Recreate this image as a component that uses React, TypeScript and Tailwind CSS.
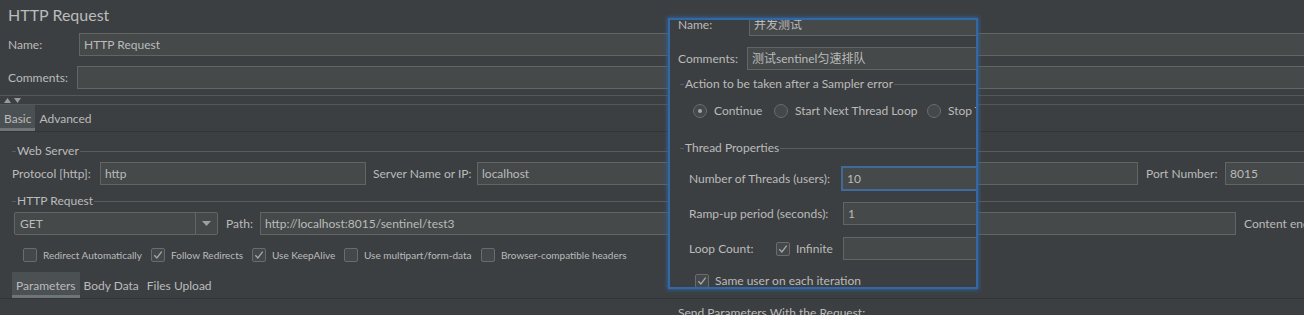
import React from "react";

function Input({ value = "", className = "" }: { value?: string; className?: string }) {
    return (
        <div
            className={`h-[23px] border border-[#646464] bg-[#45494a] px-[4px] flex items-center whitespace-nowrap overflow-hidden ${className}`}
        >
            {value}
        </div>
    );
}

function Check({ checked = false }: { checked?: boolean }) {
    return (
        <span className="w-[14px] h-[14px] shrink-0 rounded-[2px] border border-[#6b6b6b] bg-[#43494a] flex items-center justify-center">
            {checked && (
                <svg width="10" height="10" viewBox="0 0 10 10">
                    <path d="M1.3 5.3 L3.9 8 L8.7 1.6" stroke="#a8a8a8" strokeWidth="1.3" fill="none" />
                </svg>
            )}
        </span>
    );
}

function Radio({ selected = false }: { selected?: boolean }) {
    return (
        <span className="w-[14px] h-[14px] shrink-0 rounded-full border border-[#6b6b6b] bg-[#43494a] flex items-center justify-center">
            {selected && <span className="w-[4px] h-[4px] rounded-full bg-[#a8a8a8]" />}
        </span>
    );
}

function Legend({ title, className = "" }: { title: string; className?: string }) {
    return (
        <div className={`h-[14px] flex items-center ${className}`}>
            <span className="w-[4px] h-px bg-[#5a5c5e]" />
            <span className="px-[1px] whitespace-nowrap">{title}</span>
            <span className="flex-1 h-px bg-[#5a5c5e]" />
        </div>
    );
}

function Tab({ label, active = false }: { label: string; active?: boolean }) {
    return (
        <div
            className={`h-[26px] px-[4px] pt-[4px] flex items-center whitespace-nowrap border-b-[3px] ${
                active ? "bg-[#4b5053] border-[#6f7478]" : "border-transparent"
            }`}
        >
            {label}
        </div>
    );
}

const CHECKS = [
    { label: "Redirect Automatically", checked: false, w: "w-[128px]" },
    { label: "Follow Redirects", checked: true, w: "w-[101px]" },
    { label: "Use KeepAlive", checked: true, w: "w-[92px]" },
    { label: "Use multipart/form-data", checked: false, w: "w-[137px]" },
    { label: "Browser-compatible headers", checked: false, w: "w-[180px]" },
];

export default function App() {
    return (
        <div className="relative w-[1304px] h-[315px] overflow-hidden bg-[#3c3f41] text-[#bbbbbb] text-[12px] font-[family-name:Lato,'Noto_Sans_CJK_SC',sans-serif]">
            <div className="w-[1440px] flex flex-col">
                <div className="h-[30px] pl-[8px] text-[16px] leading-[30px]">HTTP Request</div>

                <div className="mt-[3px] h-[23px] flex items-center">
                    <span className="w-[79px] pl-[8px]">Name:</span>
                    <Input value="HTTP Request" className="flex-1" />
                </div>
                <div className="mt-[10px] h-[23px] flex items-center">
                    <span className="w-[77px] pl-[8px]">Comments:</span>
                    <Input className="flex-1" />
                </div>

                {/* splitter */}
                <div className="mt-[6px] h-px bg-[#55585a]" />
                <div className="h-[8px] pl-[4px] flex items-center gap-[3px]">
                    <svg width="7" height="5" viewBox="0 0 7 5">
                        <path d="M0 5 L3.5 0 L7 5 Z" fill="#9a9a9a" />
                    </svg>
                    <svg width="7" height="5" viewBox="0 0 7 5">
                        <path d="M0 0 L3.5 5 L7 0 Z" fill="#9a9a9a" />
                    </svg>
                </div>
                <div className="h-px bg-[#55585a]" />

                <div className="flex border-b border-[#323436]">
                    <Tab label="Basic" active />
                    <Tab label="Advanced" />
                </div>

                <Legend title="Web Server" className="mt-[12px] pl-[12px]" />
                <div className="mt-[4px] h-[23px] flex items-center pl-[12px]">
                    <span className="w-[88px] whitespace-nowrap">Protocol [http]:</span>
                    <Input value="http" className="w-[266px]" />
                    <span className="ml-[7px] w-[104px] whitespace-nowrap">Server Name or IP:</span>
                    <Input value="localhost" className="w-[661px]" />
                    <span className="ml-[8px] w-[79px] whitespace-nowrap">Port Number:</span>
                    <Input value="8015" className="w-[200px]" />
                </div>

                <Legend title="HTTP Request" className="mt-[9px] pl-[12px]" />
                <div className="mt-[4px] h-[23px] flex items-center pl-[14px]">
                    <div className="w-[204px] h-[23px] rounded-[2px] border border-[#646464] bg-[#45494a] flex">
                        <span className="flex-1 pl-[5px] flex items-center">GET</span>
                        <span className="w-[22px] border-l border-[#646464] flex items-center justify-center">
                            <svg width="9" height="5" viewBox="0 0 9 5">
                                <path d="M0 0 L9 0 L4.5 5 Z" fill="#a0a0a0" />
                            </svg>
                        </span>
                    </div>
                    <span className="ml-[8px] w-[34px]">Path:</span>
                    <Input value="http://localhost:8015/sentinel/test3" className="w-[976px]" />
                    <span className="ml-[8px] whitespace-nowrap">Content encoding:</span>
                </div>

                <div className="mt-[13px] h-[14px] flex items-center pl-[23px] text-[10px]">
                    {CHECKS.map((c) => (
                        <div key={c.label} className={`flex items-center gap-[6px] ${c.w}`}>
                            <Check checked={c.checked} />
                            <span className="whitespace-nowrap">{c.label}</span>
                        </div>
                    ))}
                </div>

                <div className="mt-[10px] flex pl-[12px] border-b border-[#323436]">
                    <Tab label="Parameters" active />
                    <Tab label="Body Data" />
                    <Tab label="Files Upload" />
                </div>

                <div className="mt-[6px] pl-[678px] leading-[16px] whitespace-nowrap">Send Parameters With the Request:</div>
            </div>

            {/* thread group screenshot pasted on top */}
            <div className="absolute left-[668px] top-[18px] w-[310px] h-[271px] border-2 border-[#3268a6] shadow-[0_0_4px_1px_rgba(48,100,165,0.85)] bg-[#3c3f41] overflow-hidden">
                <div className="w-[600px] flex flex-col">
                    <div className="-mt-[7px] h-[23px] flex items-center">
                        <span className="w-[79px] pl-[8px]">Name:</span>
                        <Input value="并发测试" className="flex-1" />
                    </div>
                    <div className="mt-[11px] h-[23px] flex items-center">
                        <span className="w-[77px] pl-[8px]">Comments:</span>
                        <Input value="测试sentinel匀速排队" className="flex-1" />
                    </div>

                    <Legend title="Action to be taken after a Sampler error" className="mt-[7px] pl-[10px]" />
                    <div className="mt-[13px] h-[14px] flex items-center pl-[23px]">
                        <div className="w-[81px] flex items-center gap-[7px]">
                            <Radio selected />
                            <span>Continue</span>
                        </div>
                        <div className="w-[153px] flex items-center gap-[7px]">
                            <Radio />
                            <span className="whitespace-nowrap">Start Next Thread Loop</span>
                        </div>
                        <div className="flex items-center gap-[7px]">
                            <Radio />
                            <span className="whitespace-nowrap">Stop Thread</span>
                        </div>
                    </div>

                    <Legend title="Thread Properties" className="mt-[23px] pl-[10px]" />
                    <div className="mt-[11px] h-[25px] flex items-center pl-[19px]">
                        <span className="w-[152px] whitespace-nowrap">Number of Threads (users):</span>
                        <div className="flex-1 h-[25px] border-2 border-[#41699a] bg-[#45494a] px-[4px] flex items-center">10</div>
                    </div>
                    <div className="mt-[11px] h-[23px] flex items-center pl-[19px]">
                        <span className="w-[154px] whitespace-nowrap">Ramp-up period (seconds):</span>
                        <Input value="1" className="flex-1" />
                    </div>
                    <div className="mt-[12px] h-[23px] flex items-center pl-[19px]">
                        <span className="w-[87px]">Loop Count:</span>
                        <div className="w-[67px] flex items-center gap-[6px]">
                            <Check checked />
                            <span>Infinite</span>
                        </div>
                        <Input className="flex-1" />
                    </div>
                    <div className="mt-[14px] h-[14px] flex items-center gap-[6px] pl-[25px]">
                        <Check checked />
                        <span className="whitespace-nowrap">Same user on each iteration</span>
                    </div>
                </div>
            </div>
        </div>
    );
}
